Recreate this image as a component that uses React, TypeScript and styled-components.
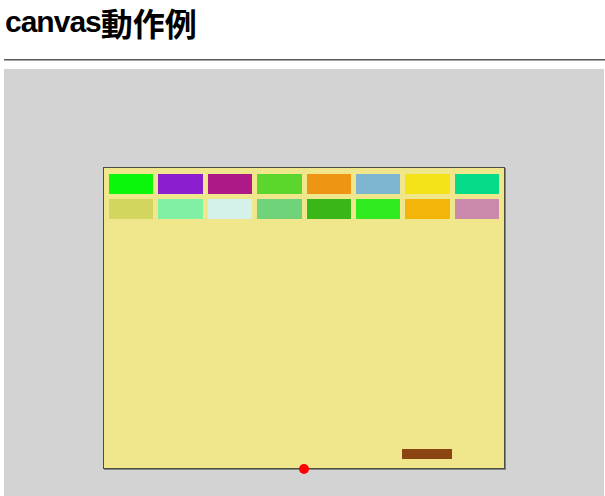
import React from "react";
import styled, { createGlobalStyle } from "styled-components";

const Global = createGlobalStyle`
  html, body { margin: 0; padding: 0; background: #fff; }
  body { font-family: "Liberation Sans", "Noto Sans CJK JP", sans-serif; }
`;

const Page = styled.div`
  padding: 0 0 0 4px;
  overflow: hidden;
  height: 496px;
`;

const Title = styled.h1`
  margin: 0;
  padding-left: 1px;
  font-family: "Liberation Sans", "Noto Sans CJK JP", sans-serif;
  font-weight: 700;
  font-size: 30px;
  line-height: 44px;
  letter-spacing: -1px;
  color: #000;
`;

const Kanji = styled.span`
  font-family: "Noto Sans CJK JP", sans-serif;
  font-size: 32px;
  letter-spacing: 0;
  vertical-align: top;
`;

const Rule = styled.hr`
  margin: 15px 0 8px 0;
  height: 0;
  border: none;
  border-top: 1px solid #5a5a5a;
  border-bottom: 1px solid #a8a8a8;
`;

const Stage = styled.div`
  width: 600px;
  height: 500px;
  background: #d3d3d3;
  display: flex;
  justify-content: center;
  padding-top: 98px;
  box-sizing: border-box;
`;

const Board = styled.div`
  position: relative;
  width: 400px;
  height: 300px;
  background: #f0e68c;
  border: 1px solid #4d4d44;
  box-shadow: 1px 1px 0 rgba(70, 70, 60, 0.55);
`;

const Bricks = styled.div`
  display: grid;
  grid-template-columns: repeat(8, 1fr);
  grid-auto-rows: 20px;
  column-gap: 5px;
  row-gap: 5px;
  padding: 6px 5px 0 5px;
`;

const Brick = styled.div<{ $c: string }>`
  background: ${(p) => p.$c};
`;

const Paddle = styled.div`
  position: absolute;
  left: 298px;
  top: 281px;
  width: 50px;
  height: 10px;
  background: #8b4513;
`;

const Ball = styled.div`
  position: absolute;
  left: 195px;
  top: 296px;
  width: 10px;
  height: 10px;
  border-radius: 50%;
  background: #ff0000;
`;

const colors = [
  "#0af70a", "#8b1fcf", "#ad1a87", "#5ad62d", "#ee9513", "#7eb6d2", "#f4e317", "#05dc8a",
  "#d2d65e", "#80f0a4", "#d5f2ea", "#70d379", "#3ab718", "#2eea1e", "#f4b50b", "#cb8aac",
];

export default function App() {
  return (
    <Page>
      <Global />
      <Title>
        canvas<Kanji>動作例</Kanji>
      </Title>
      <Rule />
      <Stage>
        <Board>
          <Bricks>
            {colors.map((c, i) => (
              <Brick key={i} $c={c} />
            ))}
          </Bricks>
          <Paddle />
          <Ball />
        </Board>
      </Stage>
    </Page>
  );
}
